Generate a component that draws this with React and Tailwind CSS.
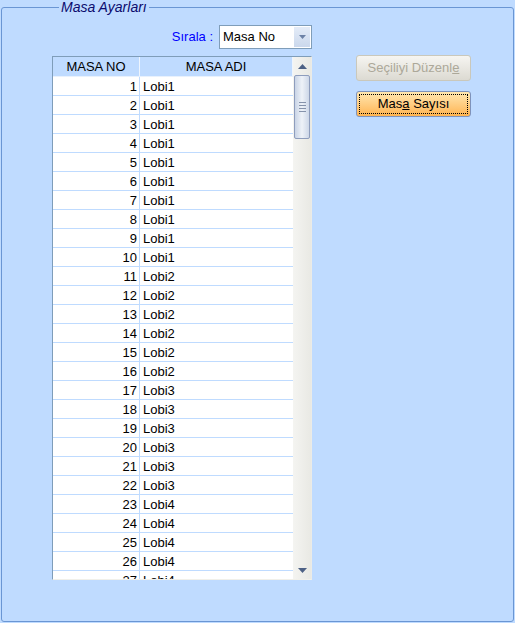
import React from 'react';

const rows = [
  ...Array.from({ length: 10 }, (_, i) => [i + 1, 'Lobi1']),
  ...Array.from({ length: 6 }, (_, i) => [i + 11, 'Lobi2']),
  ...Array.from({ length: 6 }, (_, i) => [i + 17, 'Lobi3']),
  ...Array.from({ length: 5 }, (_, i) => [i + 23, 'Lobi4']),
];

function ArrowUp() {
  return (
    <svg width="9" height="5" viewBox="0 0 9 5">
      <path d="M0 5 L4.5 0 L9 5 Z" fill="#4d6185" />
    </svg>
  );
}

function ArrowDown({ w = 9, h = 5, color = '#4d6185' }) {
  return (
    <svg width={w} height={h} viewBox="0 0 9 5">
      <path d="M0 0 L9 0 L4.5 5 Z" fill={color} />
    </svg>
  );
}

function Combo() {
  return (
    <div className="w-[93px] h-[24px] border border-[#7f9db9] bg-white flex items-center">
      <span className="flex-1 pl-[3px] leading-[16px]">Masa No</span>
      <div className="w-[16px] h-[20px] mr-[1px] bg-gradient-to-b from-[#e4ecf8] to-[#cbd8ec] flex items-center justify-center">
        <ArrowDown w={7} h={4} color="#6d82a6" />
      </div>
    </div>
  );
}

function Scrollbar() {
  return (
    <div className="w-[18px] flex flex-col bg-gradient-to-r from-[#f4f4f1] to-[#e9e9e4]">
      <div className="h-[18px] flex items-center justify-center">
        <ArrowUp />
      </div>
      <div className="mx-[1px] h-[64px] rounded-[2px] border border-[#8e9dbd] bg-gradient-to-r from-[#c9d4e6] via-[#eef2f8] to-[#cdd7e8] flex flex-col items-center justify-center gap-[2px]">
        <div className="w-[7px] h-[1px] bg-[#8592ab]" />
        <div className="w-[7px] h-[1px] bg-[#8592ab]" />
        <div className="w-[7px] h-[1px] bg-[#8592ab]" />
        <div className="w-[7px] h-[1px] bg-[#8592ab]" />
      </div>
      <div className="flex-1" />
      <div className="h-[18px] flex items-center justify-center">
        <ArrowDown />
      </div>
    </div>
  );
}

function Grid() {
  return (
    <div className="mt-[7px] w-[260px] h-[524px] border-l border-t border-[#7f9db9] border-r border-r-[#ecebe6] border-b border-b-[#f1f0ea] flex overflow-hidden">
      <div className="w-[240px] bg-white overflow-hidden">
        <div className="flex h-[20px] bg-[#bfdbff] border-b border-[#e8f1fd]">
          <div className="w-[87px] border-r border-[#eef5fe] text-center leading-[19px]">MASA NO</div>
          <div className="w-[153px] border-r border-[#eef5fe] text-center leading-[19px]">MASA ADI</div>
        </div>
        {rows.map(([no, name]) => (
          <div key={no} className="flex h-[19px] border-b border-[#bfdbff]">
            <div className="w-[87px] border-r border-[#bfdbff] text-right pr-[2px] leading-[19px]">{no}</div>
            <div className="w-[153px] pl-[3px] leading-[19px]">{name}</div>
          </div>
        ))}
      </div>
      <Scrollbar />
    </div>
  );
}

export default function App() {
  return (
    <div className="w-[515px] h-[623px] bg-[#bfdbff] px-[1px] font-['Liberation_Sans',Arial,sans-serif] text-[13px] text-black">
      <fieldset className="h-[622px] border border-[#6a96d4] rounded-[3px]">
        <legend className="ml-[57px] px-[2px] italic text-[14px] leading-[15px] text-[#0c0c6e]">
          Masa Ayarları
        </legend>
        <div className="flex items-start pt-[10px]">
          <div className="ml-[50px] w-[260px]">
            <div className="flex justify-end items-center gap-[6px] h-[24px]">
              <span className="text-[#0000ff]">Sırala :</span>
              <Combo />
            </div>
            <Grid />
          </div>
          <div className="ml-[44px] pt-[30px] flex flex-col gap-[10px]">
            <div className="w-[115px] h-[26px] rounded-[3px] border border-[#cac8bb] bg-gradient-to-b from-[#f6f5f1] to-[#dcdad2] text-[#aca899] flex items-center justify-center">
              <span>
                Seçiliyi Düzenl<u>e</u>
              </span>
            </div>
            <div className="w-[115px] h-[26px] rounded-[3px] border border-[#7f93bb] bg-gradient-to-b from-[#ffe7b0] to-[#ffb44e] p-[2px]">
              <div className="w-full h-full border border-dotted border-black flex items-center justify-center">
                <span>
                  Mas<u>a</u> Sayısı
                </span>
              </div>
            </div>
          </div>
        </div>
      </fieldset>
    </div>
  );
}
